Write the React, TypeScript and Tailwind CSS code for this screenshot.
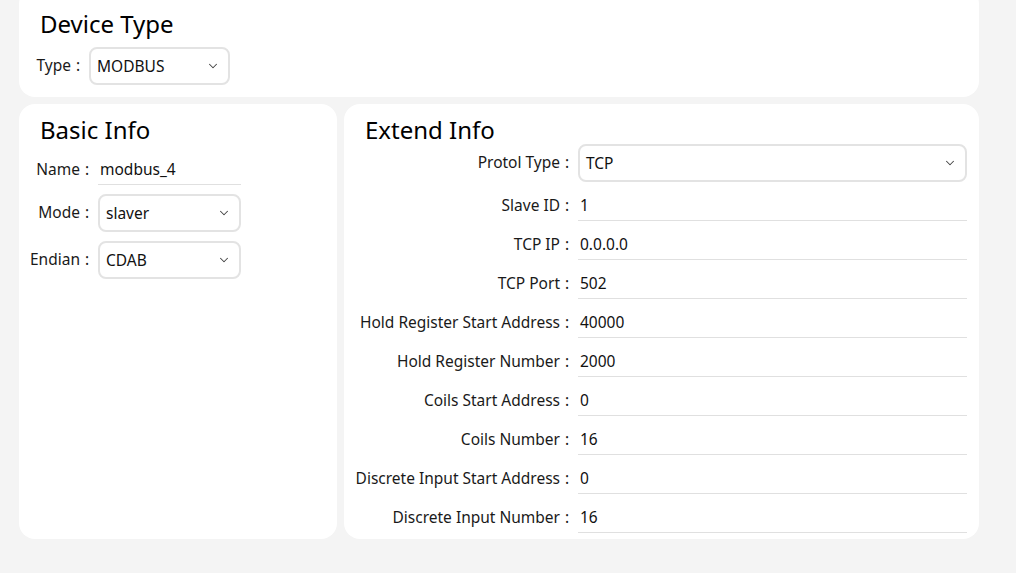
import { ChevronDown } from 'lucide-react'

const font = { fontFamily: '"Noto Sans", "Noto Sans CJK SC", sans-serif' }

const Select = ({ value, className }: { value: string; className: string }) => (
  <div className={`h-[38px] border-2 border-[#e3e3e3] rounded-[8px] bg-white flex items-center justify-between pl-[6px] pr-[8px] text-[15.5px] text-[#111] ${className}`}>
    <span className="pt-px">{value}</span>
    <ChevronDown className="w-[14px] h-[14px] text-[#444]" strokeWidth={1.8} />
  </div>
)

const Field = ({ value, className }: { value: string; className: string }) => (
  <div className={`h-[30px] border-b border-[#e0e0e0] flex items-center pl-[2px] text-[15.5px] text-[#111] ${className}`}>
    {value}
  </div>
)

const Label = ({ text, className }: { text: string; className: string }) => (
  <div className={`shrink-0 flex justify-end items-center text-[15.5px] text-[#1a1a1a] whitespace-nowrap ${className}`}>
    <span>{text}</span>
    <span className="inline-block w-[18px] pl-[5px] text-left">:</span>
  </div>
)

const extend = [
  ['Slave ID', '1'],
  ['TCP IP', '0.0.0.0'],
  ['TCP Port', '502'],
  ['Hold Register Start Address', '40000'],
  ['Hold Register Number', '2000'],
  ['Coils Start Address', '0'],
  ['Coils Number', '16'],
  ['Discrete Input Start Address', '0'],
  ['Discrete Input Number', '16'],
]

export default function App() {
  return (
    <div className="min-h-[573px] bg-[#f4f4f4] pl-[19px] w-[1016px] overflow-hidden" style={font}>
      <div className="w-[960px] flex flex-col gap-[7px]">
        {/* Device type */}
        <div className="-mt-3 bg-white rounded-2xl pt-5 pb-3 pl-[10px]">
          <h2 className="text-2xl leading-8 text-black pl-[11px]">Device Type</h2>
          <div className="flex items-center mt-[7px]">
            <Label text="Type" className="w-[60px]" />
            <Select value="MODBUS" className="w-[141px]" />
          </div>
        </div>

        <div className="flex gap-[7px] h-[435px]">
          {/* Basic info */}
          <div className="w-[318px] bg-white rounded-2xl pt-3 pl-[10px]">
            <h2 className="text-2xl leading-7 text-black pl-[11px]">Basic Info</h2>
            <div className="flex flex-col gap-[9px] mt-[11px]">
              <div className="flex items-center">
                <Label text="Name" className="w-[69px]" />
                <Field value="modbus_4" className="w-[143px]" />
              </div>
              <div className="flex items-center">
                <Label text="Mode" className="w-[69px]" />
                <Select value="slaver" className="w-[143px]" />
              </div>
              <div className="flex items-center">
                <Label text="Endian" className="w-[69px]" />
                <Select value="CDAB" className="w-[143px]" />
              </div>
            </div>
          </div>

          {/* Extend info */}
          <div className="flex-1 bg-white rounded-2xl pt-3 pl-[10px] pr-[12px]">
            <h2 className="text-2xl leading-7 text-black pl-[11px]">Extend Info</h2>
            <div className="flex flex-col gap-[9px]">
              <div className="flex items-center">
                <Label text="Protol Type" className="w-[224px]" />
                <Select value="TCP" className="flex-1" />
              </div>
              {extend.map(([k, v]) => (
                <div key={k} className="flex items-center">
                  <Label text={k} className="w-[224px]" />
                  <Field value={v} className="flex-1" />
                </div>
              ))}
            </div>
          </div>
        </div>
      </div>
    </div>
  )
}
